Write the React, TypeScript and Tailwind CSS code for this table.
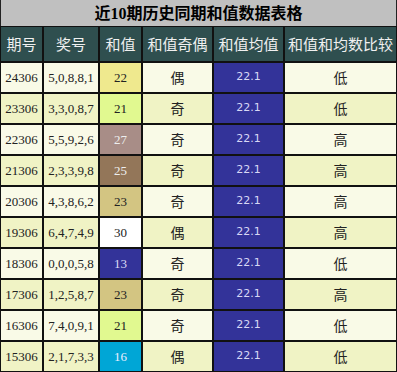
const rows = [
  { qi: "24306", nums: "5,0,8,8,1", sum: "22", sumCls: "bg-[#efe98e] text-[#222]", oe: "偶", cmp: "低" },
  { qi: "23306", nums: "3,3,0,8,7", sum: "21", sumCls: "bg-[#e1f990] text-[#222]", oe: "奇", cmp: "低" },
  { qi: "22306", nums: "5,5,9,2,6", sum: "27", sumCls: "bg-[#a88d87] text-[#eee]", oe: "奇", cmp: "高" },
  { qi: "21306", nums: "2,3,3,9,8", sum: "25", sumCls: "bg-[#937659] text-[#eee]", oe: "奇", cmp: "高" },
  { qi: "20306", nums: "4,3,8,6,2", sum: "23", sumCls: "bg-[#d3c582] text-[#222]", oe: "奇", cmp: "高" },
  { qi: "19306", nums: "6,4,7,4,9", sum: "30", sumCls: "bg-white text-[#222]", oe: "偶", cmp: "高" },
  { qi: "18306", nums: "0,0,0,5,8", sum: "13", sumCls: "bg-[#333399] text-[#dcdcf5]", oe: "奇", cmp: "低" },
  { qi: "17306", nums: "1,2,5,8,7", sum: "23", sumCls: "bg-[#d3c582] text-[#222]", oe: "奇", cmp: "高" },
  { qi: "16306", nums: "7,4,0,9,1", sum: "21", sumCls: "bg-[#e1f990] text-[#222]", oe: "奇", cmp: "低" },
  { qi: "15306", nums: "2,1,7,3,3", sum: "16", sumCls: "bg-[#00a6d6] text-[#eef]", oe: "偶", cmp: "低" },
];

const serif = "font-['Liberation_Serif','Noto_Sans_CJK_SC',serif]";
const cjk = "font-['Noto_Sans_CJK_SC',sans-serif]";

export default function App() {
  return (
    <div className="w-[397px] bg-white">
      {/* Title */}
      <div className="h-[26px] bg-[#c0c0c0] border-x border-[#222] flex items-center justify-center">
        <span className={`${cjk} font-bold text-[16px] text-black leading-none`}>
          近<span className="font-['Liberation_Serif',serif]">10</span>期历史同期和值数据表格
        </span>
      </div>

      <table className="w-[397px] table-fixed border-separate border-spacing-0 text-center">
        <colgroup>
          <col className="w-[43px]" />
          <col className="w-[56px]" />
          <col className="w-[43px]" />
          <col className="w-[71px]" />
          <col className="w-[71px]" />
          <col className="w-[113px]" />
        </colgroup>
        <thead>
          <tr className="h-[36px] bg-[#2f4f4f] text-[#f0f0f0]">
            {["期号", "奖号", "和值", "和值奇偶", "和值均值", "和值和均数比较"].map((h) => (
              <th key={h} className={`${cjk} font-normal text-[15px] border border-[#111] p-0`}>
                {h}
              </th>
            ))}
          </tr>
        </thead>
        <tbody>
          {rows.map((r, i) => (
            <tr key={r.qi} className={`h-[31px] ${i % 2 === 0 ? "bg-[#f9fae7]" : "bg-[#f0f3c5]"} text-[#222]`}>
              <td className={`${serif} text-[13px] border border-[#111] p-0`}>{r.qi}</td>
              <td className={`${serif} text-[13px] border border-[#111] p-0`}>{r.nums}</td>
              <td className={`${serif} text-[13px] border border-[#111] p-0 ${r.sumCls}`}>{r.sum}</td>
              <td className={`${cjk} text-[14px] border border-[#111] p-0`}>{r.oe}</td>
              <td className="font-['DejaVu_Sans',sans-serif] text-[11px] border border-[#111] p-0 bg-[#333399] text-[#d8d8f5]">
                22.1
              </td>
              <td className={`${cjk} text-[14px] border border-[#111] p-0`}>{r.cmp}</td>
            </tr>
          ))}
        </tbody>
      </table>
    </div>
  );
}
